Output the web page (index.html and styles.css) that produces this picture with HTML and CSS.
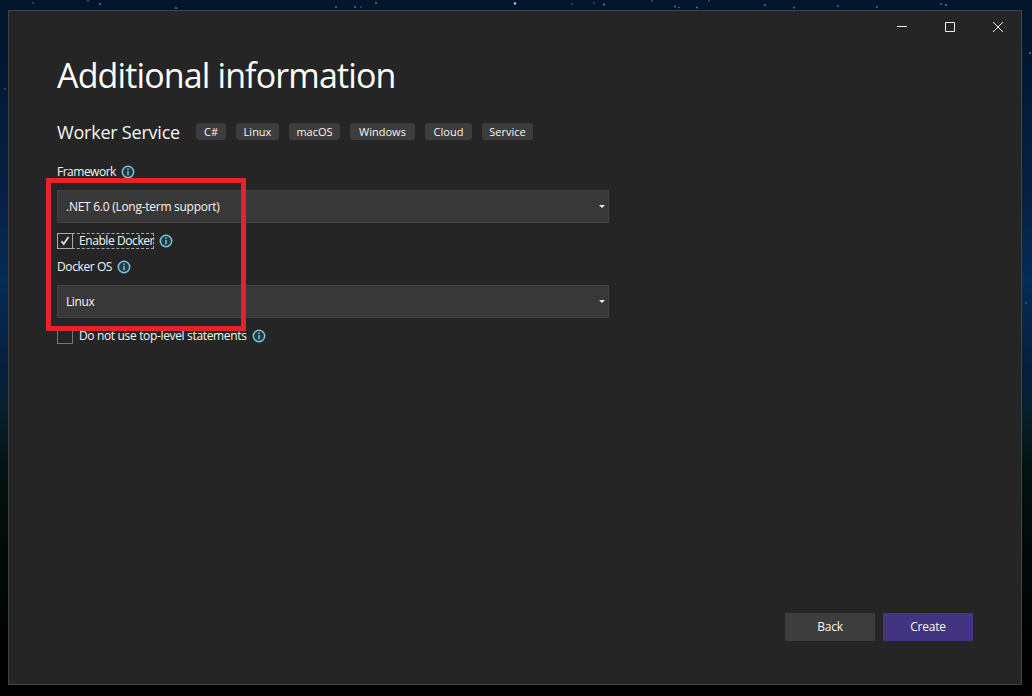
FILE: index.html
```html
<!DOCTYPE html>
<html lang="en">
<head>
<meta charset="utf-8">
<title>Additional information</title>
<link rel="stylesheet" href="styles.css">
</head>
<body>
<svg class="stars" viewBox="0 0 1032 696" aria-hidden="true">
  <g fill="#587798">
    <circle cx="33" cy="3" r=".8"/><circle cx="88" cy="1" r=".8"/><circle cx="100" cy="4" r="1.1"/><circle cx="176" cy="8" r="1.1"/><circle cx="336" cy="7" r=".9"/>
    <circle cx="355" cy="7" r="1"/><circle cx="361" cy="7" r=".7"/><circle cx="376" cy="3" r="1"/><circle cx="515" cy="3.500" r="1.300" fill="#a4c0d9"/><circle cx="572" cy="4" r=".8"/>
    <circle cx="594" cy="3" r=".8"/><circle cx="604" cy="4.500" r="1.100"/><circle cx="652" cy="1" r=".8"/><circle cx="675" cy="6.500" r="1"/><circle cx="679" cy="7.500" r=".8"/>
    <circle cx="697" cy="7.500" r="1"/><circle cx="709" cy="1" r=".8"/><circle cx="765" cy="5" r="1"/><circle cx="794" cy="7.500" r=".9"/><circle cx="838" cy="6" r=".9"/>
    <circle cx="877" cy="7" r=".9"/><circle cx="941" cy="4" r=".9"/><circle cx="946" cy="5" r="1.100"/><circle cx="1030" cy="53" r="1"/><circle cx="5" cy="89" r=".8"/><circle cx="1026" cy="303" r=".8"/>
  </g>
</svg>
<svg class="defs" aria-hidden="true">
  <symbol id="info" viewBox="0 0 14 14">
    <circle cx="7" cy="7" r="5.700" fill="#203b46" stroke="#80c4d8" stroke-width="1.500"/>
    <path d="M7 6v4.200M7 3.500v1.500" stroke="#80c4d8" stroke-width="1.500"/>
  </symbol>
</svg>
<main class="window">
  <div class="window-controls">
    <svg viewBox="0 0 10 10"><path d="M0 4.500H10"/></svg>
    <svg viewBox="0 0 10 10"><path d="M.5.5h9v9h-9z"/></svg>
    <svg viewBox="0 0 10 10"><path d="M0 0 10 10M10 0 0 10"/></svg>
  </div>
  <h1 class="title"><span>Additional information</span></h1>
  <div class="template">
    <h2 class="template-name">Worker Service</h2>
    <div class="tags">
      <span class="tag tag-csharp">C#</span><span class="tag tag-linux">Linux</span><span class="tag tag-mac">macOS</span><span class="tag tag-windows">Windows</span><span class="tag tag-cloud">Cloud</span><span class="tag tag-service">Service</span>
    </div>
  </div>
  <form class="form">
    <div class="row row-framework"><span class="t-framework">Framework</span><svg class="info"><use href="#info"/></svg></div>
    <div class="select"><span class="t-net">.NET 6.0 (Long-term support)</span><svg class="arrow" viewBox="0 0 6 3"><path d="M0 0h6L3 3z"/></svg></div>
    <div class="row row-docker">
      <span class="check focused"><span class="box"><svg viewBox="0 0 14 14"><path d="M3.500 7.200 5.700 10 10.500 3"/></svg></span><span class="t-enable">Enable Docker</span></span>
      <svg class="info"><use href="#info"/></svg>
    </div>
    <div class="row row-os"><span class="t-os">Docker OS</span><svg class="info"><use href="#info"/></svg></div>
    <div class="select"><span class="t-linux">Linux</span><svg class="arrow" viewBox="0 0 6 3"><path d="M0 0h6L3 3z"/></svg></div>
    <div class="row row-top"><span class="check"><span class="box"></span><span class="t-top">Do not use top-level statements</span></span><svg class="info"><use href="#info"/></svg></div>
  </form>
  <footer class="actions"><button class="button">Back</button><button class="button primary">Create</button></footer>
</main>
<div class="highlight"></div>
</body>
</html>
```
FILE: styles.css
```css
* { box-sizing: border-box; }
body {
  margin: 0;
  height: 696px;
  padding: 10px 10px 11px 8px;
  overflow: hidden;
  background: linear-gradient(#02152b 0, #031a35 80px, #062044 200px, #052d57 280px, #061d3b 375px, #07202d 410px, #02110f 475px, #010706 590px, #000 670px);
  color: #f5f5f5;
  font: 12px/16px "Open Sans", "Noto Sans", sans-serif;
}
svg { display: block; flex: none; }
.stars { position: absolute; left: 0; top: 0; width: 1032px; height: 696px; }
.defs { position: absolute; width: 0; height: 0; }
.window {
  position: relative;
  display: flex;
  flex-direction: column;
  height: 675px;
  padding: 0 48px;
  border: 1px solid #424545;
  background: #252525;
}
.window-controls { display: flex; justify-content: flex-end; gap: 38px; height: 31px; padding-top: 11px; margin-right: -30px; }
.window-controls svg { width: 10px; height: 10px; fill: none; stroke: #eee; stroke-width: 1; }
.title { margin: 6px 0 0; height: 54px; font-size: 34px; line-height: 54px; font-weight: 400; letter-spacing: -.87px; color: #fff; white-space: nowrap; }
.template { display: flex; align-items: center; height: 26px; margin-top: 17px; }
.template-name { width: 139px; margin: 0; font-size: 18px; line-height: 26px; font-weight: 400; letter-spacing: -.22px; }
.tags { display: flex; gap: 10px; padding-bottom: 1px; }
.tag { height: 17px; border-radius: 3px; background: #3d3d3d; font-size: 11px; line-height: 17px; text-align: center; }
.tag-csharp { width: 30px; }
.tag-linux { width: 43px; }
.tag-mac { width: 51px; }
.tag-windows { width: 65px; }
.tag-cloud { width: 47px; }
.tag-service { width: 51px; }
.form { width: 552px; margin-top: 19px; }
.row { display: flex; align-items: center; height: 16px; white-space: nowrap; }
.info { width: 14px; height: 14px; }
.row-framework { margin-bottom: 10px; }
.t-framework { width: 64px; letter-spacing: -.5px; }
.select { display: flex; align-items: center; justify-content: space-between; height: 33px; padding: 0 3px 0 8px; border: 1px solid #434343; background: #383838; }
.arrow { width: 6px; height: 3px; fill: #eee; }
.t-net { letter-spacing: -.27px; }
.t-linux { letter-spacing: -.4px; }
.row-docker { margin-top: 10px; gap: 5px; }
.check { display: flex; align-items: center; height: 16px; gap: 6px; }
.focused { width: 97px; outline: 1px dashed #aaa; outline-offset: -1px; }
.box { width: 16px; height: 16px; border: 1px solid #777; }
.focused .box { border-color: #aaa; }
.box svg { width: 14px; height: 14px; fill: none; stroke: #ddd; stroke-width: 1.800; }
.t-enable { width: 75px; letter-spacing: -.42px; }
.row-os { margin: 10px 0; }
.t-os { width: 60px; letter-spacing: -.4px; }
.row-top { margin-top: 10px; }
.t-top { width: 174px; letter-spacing: -.34px; }
.row-top .check { width: 195px; }
.actions { display: flex; justify-content: flex-end; gap: 8px; margin-top: auto; padding-bottom: 43px; }
.button { width: 90px; height: 28px; padding: 0; border: 0; background: #3d3d3d; color: #f5f5f5; font: inherit; letter-spacing: -.25px; }
.primary { background: #423480; }
.highlight { position: absolute; left: 46px; top: 178px; width: 200px; height: 153px; border: 5px solid #e92128; }
```
